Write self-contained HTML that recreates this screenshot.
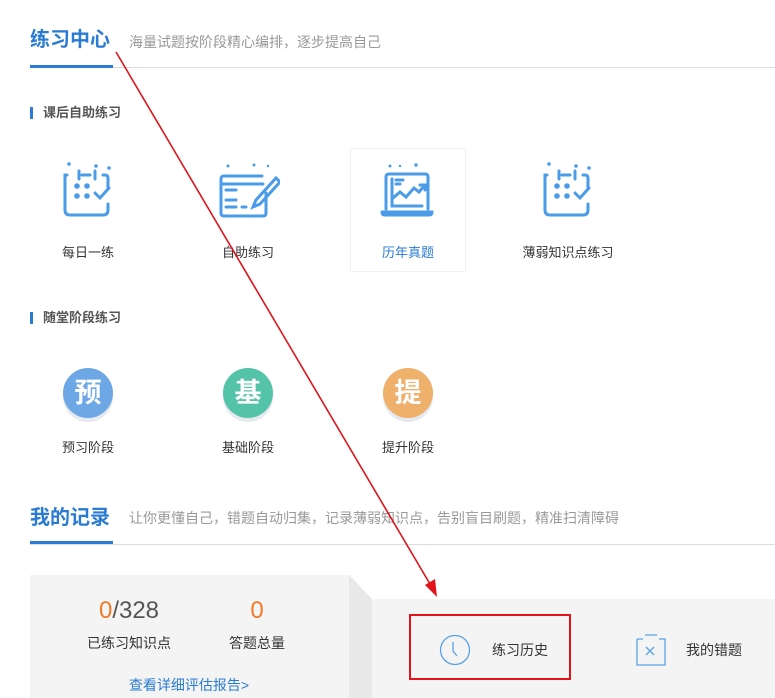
<!DOCTYPE html>
<html><head><meta charset="utf-8"><style>
*{margin:0;padding:0;box-sizing:border-box}
body{width:775px;height:698px;overflow:hidden;background:#fff;font-family:"Liberation Sans","Noto Sans CJK SC",sans-serif;position:relative;color:#333}
.a{position:absolute;white-space:nowrap}
.title{font-size:20px;font-weight:bold;color:#2a7bd3;line-height:24px}
.sub{font-size:14px;color:#999;line-height:20px}
.hl{position:absolute;height:1px;background:#ddd;left:30px;right:0}
.ul{position:absolute;height:3px;background:#2a7bd3;left:30px;width:83px}
.lab{font-size:13px;font-weight:bold;color:#555;line-height:16px}
.bar{position:absolute;width:3px;height:12px;background:#2a7bd3;left:30px}
.it{font-size:13px;color:#333;line-height:16px;transform:translateX(-50%)}
.circ{position:absolute;width:50px;height:50px;border-radius:50%;color:#fff;font-size:27px;font-weight:bold;text-align:center;line-height:50px;box-shadow:0 4px 0 #e6e9ee}
</style></head><body>
<div class="a title" style="left:30px;top:28px">练习中心</div>
<div class="a sub" style="left:129px;top:32px">海量试题按阶段精心编排，逐步提高自己</div>
<div class="hl" style="top:67px"></div><div class="ul" style="top:65px"></div>

<div class="bar" style="top:107px"></div>
<div class="a lab" style="left:43px;top:105px">课后自助练习</div>

<div style="position:absolute;left:350px;top:148px;width:116px;height:124px;border:1px solid #f2f2f2"></div>

<svg class="a" style="left:60px;top:158px" width="56" height="62" viewBox="0 0 56 62" fill="none" stroke="#4a9be8" stroke-width="3" stroke-linecap="round">
<circle cx="9" cy="6" r="1.8" fill="#4a9be8" stroke="none"/><circle cx="36" cy="8" r="1.8" fill="#4a9be8" stroke="none"/><circle cx="49" cy="10" r="1.8" fill="#4a9be8" stroke="none"/>
<path d="M7 17 h-2 v35 q0 5 5 5 h33 q5 0 5 -5 v-6 M48 30 v-10 q0 -3 -3 -3 h-2 M19 13 v8 M22 17 h8 M35 13 v8"/>
<circle cx="17" cy="28" r="2.8" fill="#4a9be8" stroke="none"/><circle cx="27" cy="28" r="2.8" fill="#4a9be8" stroke="none"/><circle cx="17" cy="38" r="2.8" fill="#4a9be8" stroke="none"/><circle cx="27" cy="38" r="2.8" fill="#4a9be8" stroke="none"/>
<path d="M35 35 l5 5 l9 -10"/></svg>
<div class="a it" style="left:88px;top:245px">每日一练</div>

<svg class="a" style="left:218px;top:160px" width="62" height="60" viewBox="0 0 62 60" fill="none" stroke="#4a9be8" stroke-width="3" stroke-linecap="round">
<circle cx="10" cy="6" r="1.5" fill="#4a9be8" stroke="none"/><circle cx="36" cy="5" r="1.5" fill="#4a9be8" stroke="none"/><circle cx="50" cy="6" r="1.2" fill="#4a9be8" stroke="none"/>
<path d="M44 16 h-38 q-3 0 -3 3 v34 q0 3 3 3 h39 q3 0 3 -3 v-20 M3 24 h42 M8 30 h10 M8 40 h10 M8 47 h10 M24 47 h4 M58 18 l-20 22 l-3 7 l7 -3 l20 -22 z"/></svg>
<div class="a it" style="left:248px;top:245px">自助练习</div>

<svg class="a" style="left:380px;top:162px" width="56" height="56" viewBox="0 0 56 56" fill="none" stroke="#4a9be8" stroke-width="3" stroke-linecap="round">
<circle cx="10" cy="4" r="1.5" fill="#4a9be8" stroke="none"/><circle cx="36" cy="3" r="1.7" fill="#4a9be8" stroke="none"/><circle cx="20" cy="4" r="1.2" fill="#4a9be8" stroke="none"/>
<path d="M6 47 v-32 q0 -3 3 -3 h36 q3 0 3 3 v32 M2 50 h50 q0 3 -3 3 h-44 q-3 0 -3 -3 M12 17 v27 h30 M16 18 h7 M16 22 h4 M13 36 l7 -6 l6 5 l8 -9 l5 4 l5 -6 M40 23 h5 v5"/></svg>
<div class="a it" style="left:408px;top:245px;color:#2a7bd3">历年真题</div>

<svg class="a" style="left:540px;top:158px" width="56" height="62" viewBox="0 0 56 62" fill="none" stroke="#4a9be8" stroke-width="3" stroke-linecap="round">
<circle cx="9" cy="6" r="1.8" fill="#4a9be8" stroke="none"/><circle cx="36" cy="8" r="1.8" fill="#4a9be8" stroke="none"/><circle cx="49" cy="10" r="1.8" fill="#4a9be8" stroke="none"/>
<path d="M7 17 h-2 v35 q0 5 5 5 h33 q5 0 5 -5 v-6 M48 30 v-10 q0 -3 -3 -3 h-2 M19 13 v8 M22 17 h8 M35 13 v8"/>
<circle cx="17" cy="28" r="2.8" fill="#4a9be8" stroke="none"/><circle cx="27" cy="28" r="2.8" fill="#4a9be8" stroke="none"/><circle cx="17" cy="38" r="2.8" fill="#4a9be8" stroke="none"/><circle cx="27" cy="38" r="2.8" fill="#4a9be8" stroke="none"/>
<path d="M35 35 l5 5 l9 -10"/></svg>
<div class="a it" style="left:568px;top:245px">薄弱知识点练习</div>

<div class="bar" style="top:312px"></div>
<div class="a lab" style="left:43px;top:310px">随堂阶段练习</div>

<div class="circ" style="left:63px;top:368px;background:#6ea7e6">预</div>
<div class="circ" style="left:223px;top:368px;background:#55c3a9">基</div>
<div class="circ" style="left:383px;top:368px;background:#eeb06b">提</div>
<div class="a it" style="left:88px;top:440px">预习阶段</div>
<div class="a it" style="left:248px;top:440px">基础阶段</div>
<div class="a it" style="left:408px;top:440px">提升阶段</div>

<div class="a title" style="left:30px;top:506px">我的记录</div>
<div class="a sub" style="left:129px;top:508px">让你更懂自己，错题自动归集，记录薄弱知识点，告别盲目刷题，精准扫清障碍</div>
<div class="hl" style="top:544px"></div><div class="ul" style="top:541px"></div>

<div style="position:absolute;left:30px;top:575px;width:320px;height:123px;background:#f4f4f4"></div>
<svg class="a" style="left:349px;top:575px" width="24" height="123"><polygon points="0,0 23,24 23,123 0,123" fill="#e8e8e8"/></svg>
<div style="position:absolute;left:372px;top:599px;width:403px;height:99px;background:#f4f4f4"></div>

<div class="a" style="left:129px;top:597px;transform:translateX(-50%);font-size:24px;color:#555;line-height:28px"><span style="color:#f07a28">0</span>/328</div>
<div class="a" style="left:257px;top:597px;transform:translateX(-50%);font-size:24px;color:#f07a28;line-height:28px">0</div>
<div class="a it" style="left:129px;top:635px;font-size:14px">已练习知识点</div>
<div class="a it" style="left:257px;top:635px;font-size:14px">答题总量</div>
<div class="a it" style="left:189px;top:677px;font-size:14px;color:#2a7bd3">查看详细评估报告&gt;</div>

<div style="position:absolute;left:409px;top:614px;width:162px;height:66px;border:2px solid #e0141a"></div>
<svg class="a" style="left:439px;top:634px" width="32" height="32" fill="none" stroke="#5aa2e6" stroke-width="1.3"><circle cx="16" cy="16" r="14.5"/><path d="M14 8 v9 l4 5"/></svg>
<div class="a" style="left:492px;top:641px;font-size:14px;line-height:18px">练习历史</div>
<svg class="a" style="left:636px;top:634px" width="30" height="32" fill="none" stroke="#5aa2e6" stroke-width="1.3"><path d="M9 1 h12 M1 5 h6 M23 5 h6 v26 h-28 v-26 M10 13 l8 8 M18 13 l-8 8"/></svg>
<div class="a" style="left:686px;top:641px;font-size:14px;line-height:18px">我的错题</div>

<svg class="a" style="left:0;top:0" width="775" height="698"><line x1="116" y1="52" x2="430" y2="584" stroke="#e0141a" stroke-width="1.6"/><polygon points="437,597 425,585 435,579" fill="#e0141a"/></svg>
</body></html>
